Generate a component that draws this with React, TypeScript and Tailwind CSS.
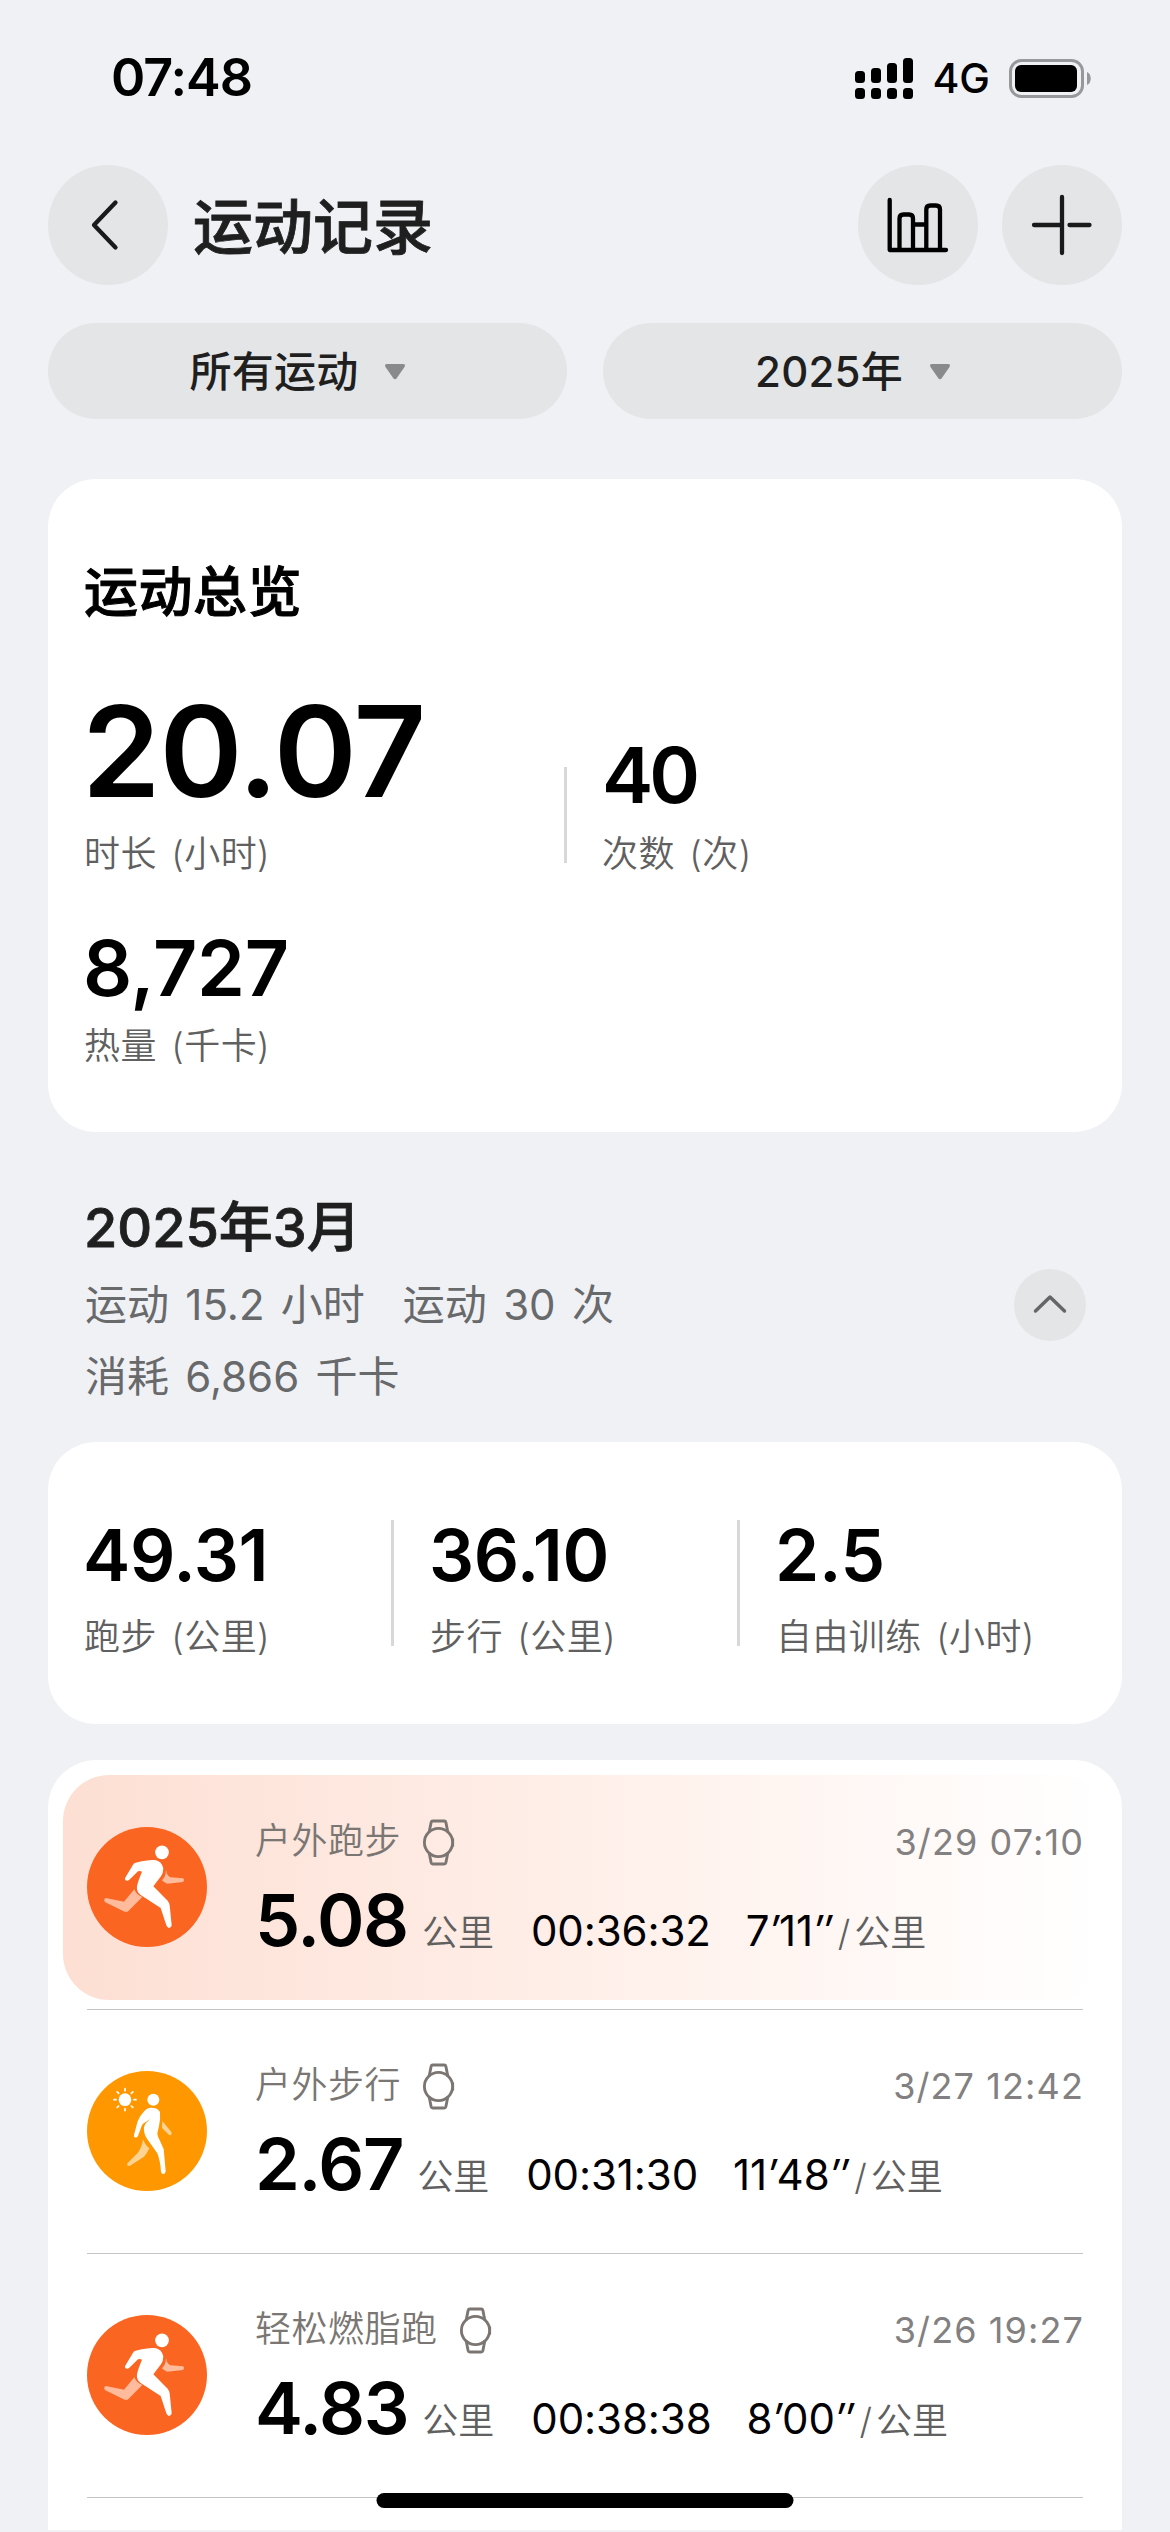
import type { ReactNode } from "react";

type Kind = "run" | "walk";

interface Workout {
  kind: Kind;
  title: string;
  date: string;
  distance: string;
  duration: string;
  pace: [string, string];
  active?: boolean;
}

const workouts: Workout[] = [
  { kind: "run", title: "户外跑步", date: "3/29 07:10", distance: "5.08", duration: "00:36:32", pace: ["7", "11"], active: true },
  { kind: "walk", title: "户外步行", date: "3/27 12:42", distance: "2.67", duration: "00:31:30", pace: ["11", "48"] },
  { kind: "run", title: "轻松燃脂跑", date: "3/26 19:27", distance: "4.83", duration: "00:38:38", pace: ["8", "00"] },
];

const monthStats = [
  { value: "49.31", label: "跑步 (公里)" },
  { value: "36.10", label: "步行 (公里)" },
  { value: "2.5", label: "自由训练 (小时)" },
];

function SignalIcon() {
  const tops = [13, 10, 5, 0];
  return (
    <svg width="58" height="41" viewBox="0 0 58 41">
      {tops.map((top, i) => (
        <g key={top}>
          <rect x={i * 16} y={top} width="10" height={25 - top} rx="3.5" />
          <rect x={i * 16} y="30" width="10" height="11" rx="3.5" />
        </g>
      ))}
    </svg>
  );
}

function BatteryIcon() {
  return (
    <svg width="82" height="39" viewBox="0 0 82 39">
      <rect x="1.5" y="1.5" width="72" height="36" rx="11" fill="none" stroke="#97989b" strokeWidth="3" />
      <rect x="6" y="6" width="62" height="27" rx="6" />
      <path d="M78 13c5 2 5 11 0 13z" fill="#97989b" />
    </svg>
  );
}

function RunIcon() {
  return (
    <svg width="120" height="120" viewBox="0 0 360 360" className="shrink-0">
      <circle cx="180" cy="180" r="180" fill="#fb6522" />
      <g fill="#ffbb9c">
        <path d="M142 187Q147 202 166 210L125 251Q120 256 113 254L55 226Q47 217 57 213L111 224Z" />
        <path d="M237 129Q240 147 250 151L288 154Q294 159 288 165L240 170Q230 166 225 160Q237 147 237 129Z" />
      </g>
      <g fill="#fff">
        <circle cx="225" cy="76" r="20.5" />
        <path d="M146 107Q180 98 204 99Q224 102 229 124Q229 138 222 148L199 178L242 221Q247 227 248 235L254 295Q253 303 246 303Q240 302 238 295L221 243L160 203Q148 194 150 178Q153 162 165 134Q160 131 153 133L127 158Q120 164 115 159Q112 155 116 150L139 112Q141 108 146 107Z" />
      </g>
    </svg>
  );
}

function WalkIcon() {
  const rays = [0, 45, 90, 135, 180, 225, 270, 315];
  return (
    <svg width="120" height="120" viewBox="0 0 360 360" className="shrink-0">
      <circle cx="180" cy="180" r="180" fill="#ff9800" />
      <g stroke="#fff" strokeWidth="5" strokeLinecap="round">
        {rays.map((r) => (
          <path key={r} d="M114 59V53" transform={`rotate(${r} 114 86)`} />
        ))}
      </g>
      <g fill="#ffd391">
        <path d="M168 204Q174 222 187 232Q181 246 171 257L128 285Q120 286 120 278L152 246Q166 226 168 204Z" />
        <path d="M226 150L253 183Q256 188 252 192Q248 194 244 190L225 171Z" />
      </g>
      <g fill="#fff">
        <circle cx="114" cy="86" r="19" />
        <circle cx="199" cy="86" r="18" />
        <path d="M189 110Q215 109 219 124Q221 145 216 165L211 187Q211 195 216 203L230 234L236 300Q235 309 229 309Q223 309 222 302Q220 270 211 247L180 203Q169 188 171 169L175 158L190 144L168 158Q164 162 162 170L153 195Q149 201 143 199Q140 197 141 191L152 151Q158 135 172 120Q178 112 189 110Z" />
      </g>
    </svg>
  );
}

function WatchIcon() {
  return (
    <svg width="33" height="47" viewBox="0 0 98 140" fill="none" stroke="#7c7672" strokeWidth="8.500">
      <circle cx="49" cy="70" r="42" />
      <path d="M21 40L27 10Q28 6 32 6H66Q70 6 71 10L77 40M21 100L27 130Q28 134 32 134H66Q70 134 71 130L77 100" />
      <path d="M93 58v24" strokeWidth="5" />
    </svg>
  );
}

function RoundButton({ children }: { children: ReactNode }) {
  return (
    <button className="size-[120px] shrink-0 rounded-full bg-[#e4e5e7]">
      <svg width="120" height="120" viewBox="0 0 120 120" fill="none" strokeWidth="4.3" strokeLinecap="round" strokeLinejoin="round">
        {children}
      </svg>
    </button>
  );
}

function FilterPill({ label }: { label: string }) {
  return (
    <button className="flex h-[96px] flex-1 items-center justify-center gap-[26px] rounded-full bg-[#e4e5e7] pr-[19px] text-[42px] leading-none font-medium tracking-[0.2px] text-[#1f1f1f]">
      <span className="mt-[2px]">{label}</span>
      <svg width="22" height="17" viewBox="0 0 22 17">
        <path d="M3 1H19Q22 1 20.500 4L12.500 15.500Q11 17 9.500 15.500L1.500 4Q0 1 3 1Z" fill="#898a8b" />
      </svg>
    </button>
  );
}

function Label({ children }: { children: ReactNode }) {
  return (
    <div className="text-[36px] leading-[52px] font-[350] tracking-[0.4px] whitespace-nowrap text-[#606060] [word-spacing:4px]">{children}</div>
  );
}

function WorkoutRow({ workout }: { workout: Workout }) {
  const highlight = workout.active ? "bg-linear-to-r from-[#fddfd3] to-white" : "";
  const [min, sec] = workout.pace;
  return (
    <li>
      <div className={`mx-[15px] mt-[9px] flex h-[225px] items-start rounded-[46px] px-[24px] ${highlight}`}>
        <div className="mt-[52px]">{workout.kind === "run" ? <RunIcon /> : <WalkIcon />}</div>
        <div className="mt-[44px] ml-[48px] flex-1">
          <div className="flex h-[44px] items-center text-[36px] leading-[44px] text-[#7a7673]">
            <span className="font-[350] tracking-[0.5px]">{workout.title}</span>
            <span className="mt-[3px] ml-[21px]">
              <WatchIcon />
            </span>
            <span className="-mr-px mt-[1px] ml-auto tracking-[1.1px] text-[#828080]">{workout.date}</span>
          </div>
          <div className="mt-[21px] flex items-baseline text-[42px] leading-[72px] whitespace-nowrap text-black">
            <span className="text-[72px] font-semibold tracking-[-1.3px]">{workout.distance}</span>
            <span className="ml-[14px] text-[36px] font-[350] text-[#606060]">公里</span>
            <span className="ml-[37px] tracking-[-0.1px]">{workout.duration}</span>
            <span className="ml-[35px]">
              {min}
              <i>′</i>
              {sec}
              <i>″</i>
            </span>
            <span className="ml-[6px] text-[36px] font-[350] text-[#606060]">/</span>
            <span className="ml-[4px] text-[36px] font-[350] text-[#606060]">公里</span>
          </div>
        </div>
      </div>
      <div className="mx-[39px] mt-[9px] h-px bg-[#c4c4c4]" />
    </li>
  );
}

export default function App() {
  return (
    <div className="relative h-[2532px] w-[1170px] overflow-hidden bg-[#f0f1f5] px-[48px] font-['Inter','Noto_Sans_CJK_SC',sans-serif] text-black">
      <div className="flex h-[156px] items-center pr-[31px] pl-[63px]">
        <span className="text-[52px] leading-none font-semibold tracking-[-1px]">07:48</span>
        <span className="ml-auto">
          <SignalIcon />
        </span>
        <span className="ml-[19px] text-[41px] leading-none font-medium">4G</span>
        <span className="ml-[19px]">
          <BatteryIcon />
        </span>
      </div>

      <header className="mt-[9px] flex items-center">
        <RoundButton>
          <path d="M67.500 37.500L46 60L67.500 82.500" stroke="#1a1a1a" />
        </RoundButton>
        <h1 className="mt-[4px] ml-[25px] text-[60px] leading-none font-medium text-[#1f1f1f] [-webkit-text-stroke:0.8px]">运动记录</h1>
        <div className="ml-auto flex gap-[24px]">
          <RoundButton>
            <path d="M31.700 35V85H88M41.500 85V53.500Q41.500 49.500 45.500 49.500H51Q55 49.500 55 53.500V85M55 59.500H68.300M68.300 85V44.500Q68.300 40.500 72.300 40.500H78Q82 40.500 82 44.500V85" stroke="#000" />
          </RoundButton>
          <RoundButton>
            <path d="M60 32V88M32 60H60M87.500 60H67.500" stroke="#1a1a1a" />
          </RoundButton>
        </div>
      </header>

      <div className="mt-[38px] flex gap-[36px]">
        <FilterPill label="所有运动" />
        <FilterPill label="2025年" />
      </div>

      <section className="mt-[60px] h-[653px] rounded-[48px] bg-white pt-[82px] pl-[36px]">
        <h2 className="text-[54px] leading-[64px] font-medium tracking-[0.5px] [-webkit-text-stroke:1px]">运动总览</h2>
        <div className="mt-[66px] flex items-end">
          <div className="w-[480px]">
            <div className="-ml-[2px] text-[126px] leading-[120px] font-semibold tracking-[-1px]">20.07</div>
            <div className="mt-[17px]">
              <Label>时长 (小时)</Label>
            </div>
          </div>
          <div className="mb-[17px] h-[96px] w-[3px] bg-[#d8d8d8]" />
          <div className="ml-[35px]">
            <div className="text-[77px] leading-[80px] font-semibold tracking-[-4px]">40</div>
            <div className="mt-[13px]">
              <Label>次数 (次)</Label>
            </div>
          </div>
        </div>
        <div className="mt-[48px] -ml-px text-[77px] leading-[80px] font-semibold tracking-[-0.3px]">8,727</div>
        <div className="mt-[12px]">
          <Label>热量 (千卡)</Label>
        </div>
      </section>

      <section className="mt-[60px] flex items-start justify-between pr-[36px] pl-[37px]">
        <div>
          <h2 className="-ml-px text-[54px] leading-[72px] font-medium text-[#1f1f1f] [-webkit-text-stroke:0.8px]">2025年3月</h2>
          <div className="mt-[5px] text-[42px] leading-[72px] font-normal text-[#68696b] [word-spacing:4.5px]">
            <div className="flex gap-[38px]">
              <span>运动 15.2 小时</span>
              <span>运动 30 次</span>
            </div>
            <div>消耗 6,866 千卡</div>
          </div>
        </div>
        <button className="mt-[77px] size-[72px] rounded-full bg-[#e4e5e7]">
          <svg width="72" height="72" viewBox="0 0 72 72" fill="none" stroke="#666" strokeWidth="3.500" strokeLinecap="round" strokeLinejoin="round">
            <path d="M21.500 42L36 28L50.500 42" />
          </svg>
        </button>
      </section>

      <section className="mt-[29px] flex h-[282px] items-start rounded-[48px] bg-white pt-[77px]">
        {monthStats.map((stat, i) => (
          <div key={stat.label} className="flex w-[346px] pl-[36px]">
            <div className="flex-1">
              <div className="-ml-px text-[71px] leading-[72px] font-semibold tracking-[-0.3px]">{stat.value}</div>
              <div className="mt-[20px]">
                <Label>{stat.label}</Label>
              </div>
            </div>
            {i < monthStats.length - 1 && <div className="mt-[1px] h-[126px] w-[3px] bg-[#d8d8d8]" />}
          </div>
        ))}
      </section>

      <ul className="mt-[36px] h-[770px] rounded-t-[48px] bg-white pt-[6px]">
        {workouts.map((workout) => (
          <WorkoutRow key={workout.date} workout={workout} />
        ))}
      </ul>

      <div className="absolute bottom-[24px] left-1/2 h-[15px] w-[417px] -translate-x-1/2 rounded-full bg-black" />
    </div>
  );
}
